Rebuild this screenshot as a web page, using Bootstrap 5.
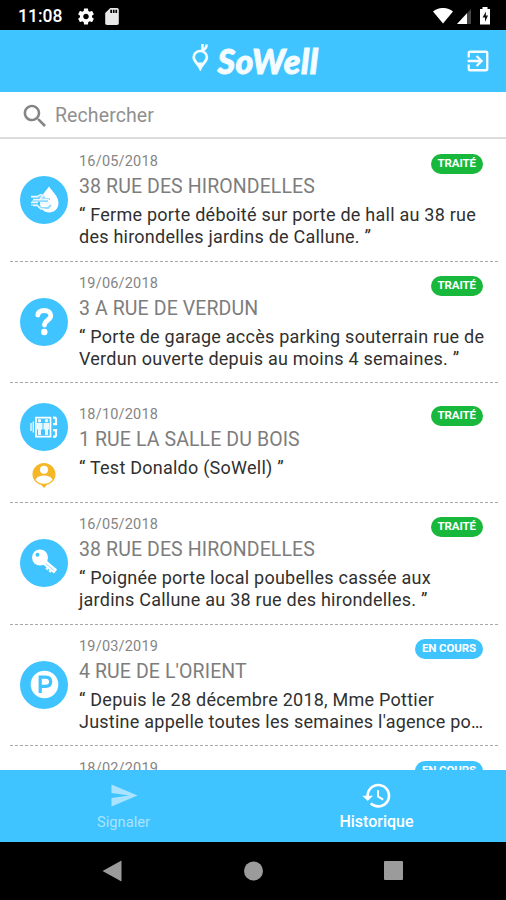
<!DOCTYPE html>
<html lang="fr">
<head>
<meta charset="utf-8">
<meta name="viewport" content="width=device-width, initial-scale=1">
<title>SoWell – Historique</title>
<link href="https://cdn.jsdelivr.net/npm/bootstrap@5.3.0/dist/css/bootstrap.min.css" rel="stylesheet">
<style>
  :root { --sky: #40c4ff; }
  body { font-family: Roboto, "Liberation Sans", sans-serif; }
  svg { display: block; flex: none; }
  .phone { height: 900px; }
  .status-bar { height: 30px; padding: 2px 15px 0 18px; font-size: 17.5px; font-weight: 500; }
  .app-bar { height: 62px; background: var(--sky); padding: 0 17px 0 44px; }
  .brand { font: italic 900 34px/40px Lato, sans-serif; letter-spacing: .5px; color: #f4fcff; -webkit-text-stroke: .9px #f4fcff; }
  .search-bar { height: 47px; padding: 2px 23px 0; border-bottom: 2px solid #dcdcdc; }
  .search-bar input { font-size: 19.5px; letter-spacing: .1px; height: 40px; margin-left: 9px; }
  .search-bar input::placeholder { color: #909090; opacity: 1; }
  .report-list { flex: 1 1 0; min-height: 0; padding: 1px 8px 0 10px; }
  .report { height: 121.7px; flex: none; padding: 0 14px 0 10px; border-bottom: 1px dashed #a8a8a8; }
  .report.short { height: 119.6px; }
  .report.clipped { padding-top: 14px; }
  .avatar { width: 48px; height: 48px; background: var(--sky); }
  .avatars { width: 48px; margin-right: 11px; }
  .short .avatars { padding-top: 7px; }
  .resident { margin-top: 10px; }
  .meta { height: 18px; line-height: 18px; font-size: 14.5px; letter-spacing: .2px; color: #858585; padding-right: 1px; }
  .place { font-size: 19.5px; line-height: 30px; color: #7d7d7d; font-weight: 400; letter-spacing: .1px; margin: 1px 0 2px; white-space: nowrap; }
  .detail { font-size: 18px; line-height: 22px; color: #303030; letter-spacing: .24px; margin: 0 -8px 0 0; white-space: nowrap; }
  .status-pill { height: 20px; line-height: 18px; padding: 0 7px; font-size: 11.5px; font-weight: 700; letter-spacing: -.1px; margin-top: 1px; flex: none; }
  .short .status-pill { margin-top: 0; }
  .done { background: #17b83b; }
  .open { background: var(--sky); }
  .tab-bar { height: 72px; background: var(--sky); }
  .tab-item { color: #fff; font-size: 16px; line-height: 22px; font-weight: 500; padding: 9px 6px 0 0; }
  .tab-item.idle { color: #a9e3ff; font-size: 14.7px; font-weight: 400; }
  .system-nav { height: 58px; }
</style>
</head>
<body class="bg-white">
<div class="phone d-flex flex-column overflow-hidden">
  <div class="status-bar bg-black text-white d-flex align-items-center flex-shrink-0">
    <span>11:08</span>
    <svg class="ms-3" width="16" height="17" viewBox="2 2 20 20" fill="#fff"><path d="M19.43 12.98c.04-.32.07-.64.07-.98s-.03-.66-.07-.98l2.11-1.65c.19-.15.24-.42.12-.64l-2-3.460c-.12-.22-.39-.3-.61-.22l-2.490 1c-.52-.4-1.080-.73-1.690-.98l-.38-2.650C14.460 2.180 14.250 2 14 2h-4c-.25 0-.46.18-.49.42l-.38 2.650c-.61.25-1.170.59-1.690.98l-2.490-1c-.23-.09-.49 0-.61.22l-2 3.460c-.13.22-.07.49.12.64l2.110 1.650c-.04.32-.07.65-.07.98s.03.66.07.98l-2.110 1.650c-.19.15-.24.42-.12.64l2 3.460c.12.22.39.3.61.22l2.490-1c.52.4 1.080.73 1.690.98l.38 2.650c.03.24.24.42.49.42h4c.25 0 .46-.18.49-.42l.38-2.650c.61-.25 1.170-.59 1.690-.98l2.490 1c.23.09.49 0 .61-.22l2-3.460c.12-.22.07-.49-.12-.64l-2.110-1.650zM12 15.500c-1.930 0-3.500-1.570-3.500-3.500s1.570-3.500 3.500-3.500 3.500 1.570 3.500 3.500-1.570 3.500-3.500 3.500z"/></svg>
    <svg class="ms-2" width="20" height="17" viewBox="2 2 20 20" fill="#e8e8e8"><path d="M18 2h-8L4 8v12c0 1.100.9 2 2 2h12c1.100 0 2-.9 2-2V4c0-1.100-.9-2-2-2zm-6 6h-2V4h2v4zm3 0h-2V4h2v4zm3 0h-2V4h2v4z"/></svg>
    <svg class="ms-auto" width="20" height="16" viewBox="0 0 20 16" fill="#fff"><path d="M0 3.500C6-1.200 14-1.200 20 3.500L10 15.500Z"/></svg>
    <svg class="ms-1" width="14" height="15" viewBox="0 0 14 15"><path d="M0 15 14 0V15Z" fill="#444"/><path d="M0 15 10 4.300V15Z" fill="#fff"/></svg>
    <svg class="ms-2" width="12" height="18" viewBox="0 0 12 18"><path d="M3.500 0h5v2H11v15.500H1V2h2.500Z" fill="#fff"/><path d="M7 4.500 3.500 10.500H6V15L9 8.500H6.800Z" fill="#111"/></svg>
  </div>

  <header class="app-bar d-flex align-items-center flex-shrink-0">
    <div class="d-flex align-items-center justify-content-center flex-grow-1">
      <svg class="me-2 mb-2" width="17" height="28" viewBox="0 0 17 28" fill="none" stroke="#f4fcff"><path d="M8.300 8C4.500 8 1.700 10.900 1.700 14.300c0 4.200 4.600 6.400 6.600 11.200 2-4.800 6.600-7 6.600-11.200C14.900 10.900 12.100 8 8.300 8Z" stroke-width="2.700"/><path d="M4.500 19.500h7.600l-3.800 7Z" fill="#f4fcff" stroke="none"/><path d="M10.500 8.500V1M14.500 1.500c.2 3-1 4.500-4 6" stroke-width="2.600"/></svg>
      <span class="brand">SoWell</span>
    </div>
    <svg width="22" height="22" viewBox="2.500 2.500 19 19" fill="#f4fcff"><path d="M10.090 15.590 11.500 17l5-5-5-5-1.410 1.410L12.670 11H3v2h9.670l-2.580 2.590zM19 3H5c-1.110 0-2 .9-2 2v4h2V5h14v14H5v-4H3v4c0 1.100.89 2 2 2h14c1.100 0 2-.9 2-2V5c0-1.100-.9-2-2-2z"/></svg>
  </header>

  <div class="search-bar d-flex align-items-center bg-white flex-shrink-0">
    <svg width="23" height="23" viewBox="2.500 2.500 18 18" fill="#858585"><path d="M15.500 14h-.79l-.28-.27C15.410 12.590 16 11.110 16 9.500 16 5.910 13.090 3 9.500 3S3 5.910 3 9.500 5.910 16 9.500 16c1.610 0 3.090-.59 4.230-1.570l.27.28v.79l5 4.990L20.490 19l-4.990-5zm-6 0C7.010 14 5 11.990 5 9.500S7.010 5 9.500 5 14 7.010 14 9.500 11.990 14 9.500 14z"/></svg>
    <input class="form-control border-0 shadow-none bg-transparent p-0" type="text" placeholder="Rechercher" aria-label="Rechercher">
  </div>

  <main class="report-list d-flex flex-column overflow-hidden">
    <article class="report d-flex align-items-center">
      <div class="avatars"><div class="avatar rounded-circle">
        <svg width="48" height="48" viewBox="0 0 48 48"><path d="M29 10.500c3 4.500 9.500 9.800 9.500 16.500 0 5.500-4 9.500-9.300 9.500S20 32.500 20 27c0-6.500 6-12 9-16.500Z" fill="#fff"/><path d="M11 21h7l4-2 2 2-3 2h9M12 25h16M11 29h6l4 3h7l3-3" fill="none" stroke="#8fdcff" stroke-width="2"/><path d="M11 20.500h6l4-2 2 1.500-3 2.500M13 23.500h7M11 26.500h7M13 29.500h4l4 3.500h4M20 23.500h9M20 27h10" fill="none" stroke="#e9f8ff" stroke-width="1.300"/></svg>
      </div></div>
      <div class="flex-grow-1">
        <div class="meta d-flex justify-content-between"><span>16/05/2018</span><span class="status-pill rounded-pill text-white done">TRAITÉ</span></div>
        <h2 class="place">38 RUE DES HIRONDELLES</h2>
        <p class="detail">“ Ferme porte déboité sur porte de hall au 38 rue<br>des hirondelles jardins de Callune. ”</p>
      </div>
    </article>

    <article class="report d-flex align-items-center">
      <div class="avatars"><div class="avatar rounded-circle">
        <svg width="48" height="48" viewBox="0 0 48 48" fill="none" stroke="#fff" stroke-width="4.800" stroke-linecap="round"><path d="M17.800 17c.5-3 3-4.500 6.400-4.500 4 0 6.600 2 6.600 5 0 4.700-6.300 4.800-6.300 9.600"/><circle cx="24.300" cy="34" r="3.200" fill="#fff" stroke="none"/></svg>
      </div></div>
      <div class="flex-grow-1">
        <div class="meta d-flex justify-content-between"><span>19/06/2018</span><span class="status-pill rounded-pill text-white done">TRAITÉ</span></div>
        <h2 class="place">3 A RUE DE VERDUN</h2>
        <p class="detail">“ Porte de garage accès parking souterrain rue de<br>Verdun ouverte depuis au moins 4 semaines. ”</p>
      </div>
    </article>

    <article class="report short d-flex align-items-center">
      <div class="avatars d-flex flex-column align-items-center"><div class="avatar rounded-circle">
        <svg width="48" height="48" viewBox="0 0 48 48" fill="none" stroke="#fff"><path d="M16 14.700h14.500v19H16Z" stroke-width="1.700"/><path d="M33 14.700h1.500q1.500 0 1.500 2v4.500h-3M33 33.700h1.500q1.500 0 1.500-2v-4.500h-3" stroke-width="2.200"/><g fill="#e9f8ff" stroke="none"><circle cx="19.500" cy="17.800" r="1.800"/><circle cx="26.500" cy="17.800" r="1.800"/><path d="M16.500 20h6v6.500H21V32h-3v-5.500h-1.500ZM23.500 20h6v6.500H28V32h-3v-5.500h-1.500Z"/></g><path d="M11 20v8M13.300 18.500v11" stroke-width="1.300"/></svg>
      </div>
      <svg class="resident" width="24" height="28" viewBox="0 0 24 28"><path d="M12 2C5.700 2 .5 7 .5 13.200c0 5.200 3.600 9.100 8.500 10.600l3 3.200 3-3.200c4.900-1.500 8.500-5.400 8.500-10.600C23.500 7 18.300 2 12 2Z" fill="#f5b727"/><circle cx="12" cy="8.800" r="4" fill="#fff"/><path d="M3.500 18.500c1.500-3 5-4 8.500-4s7 1 8.500 4c-2 3-5 4.200-8.500 4.200s-6.500-1.200-8.500-4.200Z" fill="#fff"/></svg>
      </div>
      <div class="flex-grow-1">
        <div class="meta d-flex justify-content-between"><span>18/10/2018</span><span class="status-pill rounded-pill text-white done">TRAITÉ</span></div>
        <h2 class="place">1 RUE LA SALLE DU BOIS</h2>
        <p class="detail">“ Test Donaldo (SoWell) ”</p>
      </div>
    </article>

    <article class="report d-flex align-items-center">
      <div class="avatars"><div class="avatar rounded-circle">
        <svg width="48" height="48" viewBox="0 0 48 48"><path d="M23 22 35.500 32.500" stroke="#fff" stroke-width="5"/><path d="m25.500 24.500 8.500 7" stroke="#8edcff" stroke-width="1"/><path d="m26 29 2 1.500M29 31.500l2 1.500" stroke="#fff" stroke-width="2"/><circle cx="20" cy="18.500" r="8" fill="#fff"/><circle cx="17.500" cy="15.800" r="2" fill="#40c4ff"/></svg>
      </div></div>
      <div class="flex-grow-1">
        <div class="meta d-flex justify-content-between"><span>16/05/2018</span><span class="status-pill rounded-pill text-white done">TRAITÉ</span></div>
        <h2 class="place">38 RUE DES HIRONDELLES</h2>
        <p class="detail">“ Poignée porte local poubelles cassée aux<br>jardins Callune au 38 rue des hirondelles. ”</p>
      </div>
    </article>

    <article class="report d-flex align-items-center">
      <div class="avatars"><div class="avatar rounded-circle">
        <svg width="48" height="48" viewBox="0 0 48 48"><circle cx="24.500" cy="23.500" r="13.800" fill="#fff"/><path d="M20.200 32V16.200h5.300c3.300 0 5.200 1.700 5.200 4.500s-1.900 4.600-5.200 4.600h-5.300" fill="none" stroke="#40c4ff" stroke-width="3.200"/></svg>
      </div></div>
      <div class="flex-grow-1">
        <div class="meta d-flex justify-content-between"><span>19/03/2019</span><span class="status-pill rounded-pill text-white open">EN COURS</span></div>
        <h2 class="place">4 RUE DE L'ORIENT</h2>
        <p class="detail">“ Depuis le 28 décembre 2018, Mme Pottier<br>Justine appelle toutes les semaines l'agence po…</p>
      </div>
    </article>

    <article class="report clipped d-flex align-items-start">
      <div class="avatars"></div>
      <div class="flex-grow-1">
        <div class="meta d-flex justify-content-between"><span>18/02/2019</span><span class="status-pill rounded-pill text-white open">EN COURS</span></div>
      </div>
    </article>
  </main>

  <nav class="tab-bar d-flex flex-shrink-0">
    <div class="tab-item idle w-50 d-flex flex-column align-items-center">
      <svg width="34" height="32" viewBox="0 0 34 32" fill="#a9e3ff"><path d="M4.500 5.500 30.500 16.500 4.500 27.500V19L22 16.500 4.500 14Z"/></svg>
      <span>Signaler</span>
    </div>
    <div class="tab-item w-50 d-flex flex-column align-items-center">
      <svg width="32" height="32" viewBox="0 -0.500 24 24" fill="#fff"><path d="M13 3c-4.970 0-9 4.030-9 9H1l3.890 3.890.07.14L9 12H6c0-3.870 3.130-7 7-7s7 3.130 7 7-3.130 7-7 7c-1.930 0-3.680-.79-4.940-2.060l-1.420 1.420C8.270 19.990 10.510 21 13 21c4.970 0 9-4.030 9-9s-4.030-9-9-9zm-1 5v5l4.280 2.540.72-1.210-3.500-2.080V8H12z"/></svg>
      <span>Historique</span>
    </div>
  </nav>

  <div class="system-nav bg-black d-flex align-items-center flex-shrink-0">
    <svg width="506" height="58" viewBox="0 0 506 58" fill="#9b9b9b"><path d="M102.500 29 121.500 18.500V39.500Z"/><circle cx="253.500" cy="29" r="9.500"/><rect x="384" y="19" width="19" height="19" rx="1"/></svg>
  </div>
</div>
<script src="https://cdn.jsdelivr.net/npm/bootstrap@5.3.0/dist/js/bootstrap.bundle.min.js"></script>
</body>
</html>
